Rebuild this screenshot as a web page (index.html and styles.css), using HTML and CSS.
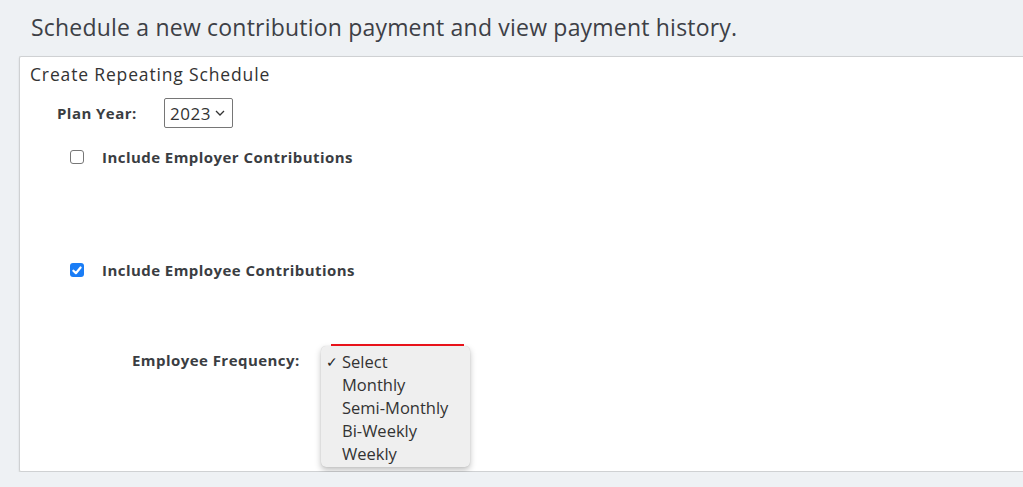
FILE: index.html
```html
<!DOCTYPE html>
<html>
<head>
<meta charset="utf-8">
<link rel="stylesheet" href="styles.css">
</head>
<body>
<h1 class="page-title">Schedule a new contribution payment and view payment history.</h1>
<div class="card">
  <div class="card-title">Create Repeating Schedule</div>
  <div class="plan-row">
    <span class="bold-label">Plan Year:</span>
    <div class="year-select">2023
      <svg class="chev" width="10" height="6" viewBox="0 0 10 6"><path d="M1 1l4 4 4-4" fill="none" stroke="#333" stroke-width="1.3"/></svg>
    </div>
  </div>
  <div class="check-row employer">
    <span class="box"></span>
    <span class="bold-label">Include Employer Contributions</span>
  </div>
  <div class="check-row employee">
    <span class="box checked">
      <svg width="10" height="9" viewBox="0 0 10 9"><path d="M1.4 4.7l2.5 2.5L8.6 1.5" fill="none" stroke="#fff" stroke-width="2.2" stroke-linecap="round" stroke-linejoin="round"/></svg>
    </span>
    <span class="bold-label">Include Employee Contributions</span>
  </div>
  <div class="freq-row">
    <span class="bold-label freq-label">Employee Frequency:</span>
    <div class="freq-select">
      <div class="menu">
        <div class="opt sel"><span class="tick">✓</span>Select</div>
        <div class="opt">Monthly</div>
        <div class="opt">Semi-Monthly</div>
        <div class="opt">Bi-Weekly</div>
        <div class="opt">Weekly</div>
      </div>
    </div>
  </div>
</div>
</body>
</html>
```
FILE: styles.css
```css
html, body {
  margin: 0;
  padding: 0;
  background: #eef1f4;
  font-family: "Open Sans", "Lato", sans-serif;
  color: #3a3d42;
}
.page-title {
  margin: 0;
  padding: 13px 0 0 31px;
  height: 43px;
  box-sizing: border-box;
  font-weight: 400;
  font-size: 23px;
  letter-spacing: 0.2px;
  line-height: 28px;
  color: #3d4046;
}
.card {
  margin: 13px 0 0 19px;
  height: 414px;
  background: #fff;
  border: 1px solid #cfd1d3;
  border-right: none;
  border-radius: 2px 0 0 2px;
  box-shadow: 0 1px 2px rgba(0,0,0,0.12);
  position: relative;
}
.card-title {
  padding: 6px 0 0 10px;
  font-size: 17.5px;
  letter-spacing: 0.85px;
  line-height: 22px;
  color: #333;
}
.bold-label {
  font-weight: 700;
  font-size: 15px;
  letter-spacing: 0.45px;
  color: #3a3d42;
}
.plan-row {
  display: flex;
  align-items: center;
  margin-top: 13px;
  padding-left: 37px;
  height: 30px;
}
.plan-row .bold-label {
  width: 107px;
}
.year-select {
  display: flex;
  align-items: center;
  gap: 4px;
  box-sizing: border-box;
  height: 30px;
  width: 69px;
  padding: 0 5px;
  border: 1px solid #767676;
  border-radius: 2px;
  font-size: 17px;
  letter-spacing: 0.5px;
  color: #333;
}
.check-row {
  display: flex;
  align-items: center;
  padding-left: 50px;
  height: 16px;
}
.check-row.employer { margin-top: 21px; }
.check-row.employee { margin-top: 97px; }
.box {
  width: 12px;
  height: 12px;
  border: 1px solid #777;
  border-radius: 3px;
  margin-right: 18px;
  display: flex;
  align-items: center;
  justify-content: center;
  flex-shrink: 0;
}
.box.checked {
  background: #1a7df6;
  width: 14px;
  height: 14px;
  border: none;
}
.freq-row {
  display: flex;
  padding-left: 112px;
  margin-top: 67px;
  height: 30px;
}
.freq-label {
  width: 199px;
  line-height: 30px;
}
.freq-select {
  position: relative;
  width: 133px;
  height: 30px;
}
.freq-select::before {
  content: "";
  position: absolute;
  left: 0;
  right: 0;
  top: -1px;
  height: 2px;
  background: #e8121a;
  z-index: 2;
}
.menu {
  position: absolute;
  z-index: 1;
  left: -10px;
  top: 1px;
  width: 149px;
  box-sizing: border-box;
  padding: 4px 0 2px 0;
  background: #efefef;
  border-radius: 5px;
  box-shadow: 0 3px 6px rgba(0,0,0,0.25), 0 0 1px rgba(0,0,0,0.2);
  font-size: 16.5px;
  color: #333;
}
.opt {
  height: 23px;
  line-height: 23px;
  padding-left: 21px;
  position: relative;
}
.tick {
  position: absolute;
  left: 5px;
  font-size: 14px;
  color: #222;
}
```
